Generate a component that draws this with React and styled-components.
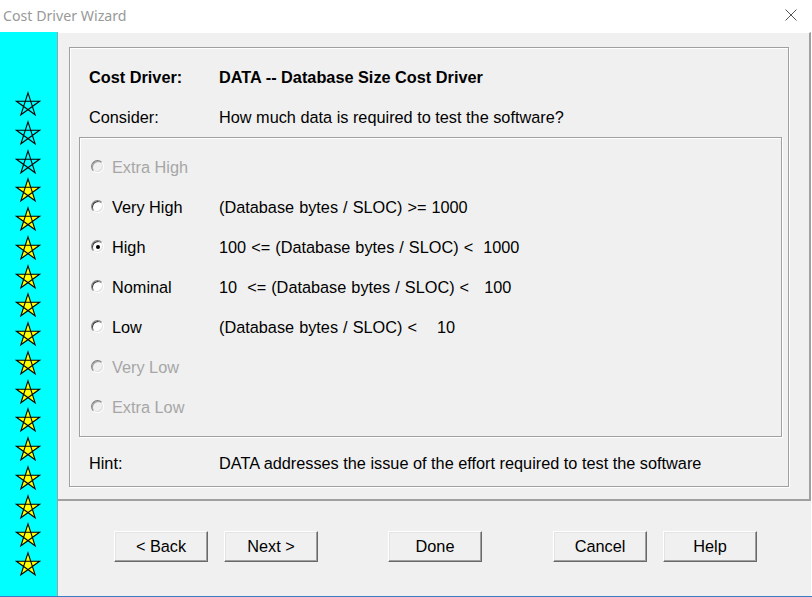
import React from 'react';
import styled, { createGlobalStyle } from 'styled-components';

const GlobalStyle = createGlobalStyle`
  html, body {
    margin: 0;
    padding: 0;
    background: #ffffff;
  }
  * {
    box-sizing: border-box;
  }
`;

// star points for the pentagram (drawn 0-2-4-1-3)
const STAR_PATH = 'M12 0.8 L19.1 22.8 L0.4 9.2 L23.6 9.2 L4.9 22.8 Z';

const ratings = [
  { level: 'Extra High', text: '', disabled: true },
  { level: 'Very High', text: '(Database bytes / SLOC) >= 1000' },
  { level: 'High', text: '100 <= (Database bytes / SLOC) <  1000', checked: true },
  { level: 'Nominal', text: '10  <= (Database bytes / SLOC) <   100' },
  { level: 'Low', text: '(Database bytes / SLOC) <    10' },
  { level: 'Very Low', text: '', disabled: true },
  { level: 'Extra Low', text: '', disabled: true },
];

const stars = Array.from({ length: 17 }, (_, i) => i >= 3);

const Star = ({ filled }) => (
  <StarIcon viewBox="0 0 24 24" width="24" height="24">
    <path
      d={STAR_PATH}
      fill={filled ? '#ffff00' : 'none'}
      stroke="#000"
      strokeWidth="1.1"
      strokeLinejoin="miter"
    />
  </StarIcon>
);

const App = () => {
  return (
    <>
      <GlobalStyle />
      <Window>
        <TitleBar>
          <Title>Cost Driver Wizard</Title>
          <CloseIcon viewBox="0 0 12 12" width="12" height="12">
            <path d="M0.5 0.5 L11.5 11.5 M11.5 0.5 L0.5 11.5" stroke="#555" strokeWidth="1" />
          </CloseIcon>
        </TitleBar>

        <Body>
          <Sidebar>
            {stars.map((filled, i) => (
              <Star key={i} filled={filled} />
            ))}
          </Sidebar>

          <Main>
            <TopSection>
              <Panel>
                <HeaderRow>
                  <Strong>Cost Driver:</Strong>
                  <Strong>DATA -- Database Size Cost Driver</Strong>
                </HeaderRow>
                <HeaderRow>
                  <span>Consider:</span>
                  <span>How much data is required to test the software?</span>
                </HeaderRow>

                <GroupBox>
                  {ratings.map((r) => (
                    <RadioRow key={r.level} $disabled={r.disabled}>
                      <Radio $checked={r.checked} $disabled={r.disabled} />
                      <span>{r.level}</span>
                      <Desc>{r.text}</Desc>
                    </RadioRow>
                  ))}
                </GroupBox>

                <HintRow>
                  <span>Hint:</span>
                  <span>DATA addresses the issue of the effort required to test the software</span>
                </HintRow>
              </Panel>
            </TopSection>

            <ButtonBar>
              <Button>&lt; Back</Button>
              <Button $space={16}>Next &gt;</Button>
              <Button $space={70}>Done</Button>
              <Button $space={71}>Cancel</Button>
              <Button $space={16}>Help</Button>
            </ButtonBar>
          </Main>
        </Body>
      </Window>
    </>
  );
};

const Window = styled.div`
  width: 812px;
  height: 597px;
  display: flex;
  flex-direction: column;
  background: #ffffff;
  font-family: 'Liberation Sans', Arial, sans-serif;
  font-size: 16.3px;
  color: #000;
  overflow: hidden;
`;

const TitleBar = styled.div`
  height: 32px;
  flex: none;
  display: flex;
  align-items: center;
  justify-content: space-between;
  padding: 0 15px 2px 3px;
  background: #ffffff;
`;

const Title = styled.span`
  font-family: 'Noto Sans', 'Open Sans', sans-serif;
  font-size: 14.2px;
  color: #999999;
`;

const CloseIcon = styled.svg`
  display: block;
`;

const Body = styled.div`
  flex: 1;
  display: flex;
  border-bottom: 1px solid #3b7cc4;
  min-height: 0;
`;

const Sidebar = styled.div`
  width: 58px;
  flex: none;
  background: #00ffff;
  border-right: 1px solid #a0a0a0;
  display: flex;
  flex-direction: column;
  align-items: flex-start;
  padding: 60px 0 0 16px;
  gap: 4.75px;
`;

const StarIcon = styled.svg`
  display: block;
  flex: none;
  overflow: visible;
`;

const Main = styled.div`
  flex: 1;
  display: flex;
  flex-direction: column;
  background: #f0f0f0;
  margin-right: 1px;
`;

const TopSection = styled.div`
  flex: none;
  border-top: 1px solid #ffffff;
  border-right: 2px solid #a0a0a0;
  border-bottom: 2px solid #a0a0a0;
  padding: 14px 20px 12px 11px;
`;

const Panel = styled.div`
  height: 440px;
  border: 1px solid #a0a0a0;
  box-shadow: inset 1px 1px 0 #ffffff, 1px 1px 0 #ffffff;
  padding: 9px 6px 3px 9px;
  display: flex;
  flex-direction: column;
`;

const HeaderRow = styled.div`
  height: 40px;
  display: grid;
  grid-template-columns: 130px 1fr;
  align-items: center;
  padding: 1px 0 0 10px;
  white-space: nowrap;
`;

const HintRow = styled(HeaderRow)`
  margin-top: 6px;
`;

const Strong = styled.span`
  font-weight: bold;
`;

const GroupBox = styled.div`
  height: 300px;
  border: 1px solid #a0a0a0;
  box-shadow: inset 1px 1px 0 #ffffff, 1px 1px 0 #ffffff;
  padding: 9px 0 9px 11px;
`;

const RadioRow = styled.div`
  height: 40px;
  display: grid;
  grid-template-columns: 13px 99px 1fr;
  column-gap: 8px;
  align-items: center;
  padding-top: 1px;
  color: ${(p) => (p.$disabled ? '#a6a6a6' : '#000')};
`;

const Desc = styled.span`
  white-space: pre;
  word-spacing: 0.5px;
`;

const Radio = styled.span`
  position: relative;
  width: 13px;
  height: 13px;
  border-radius: 50%;
  background: ${(p) => (p.$disabled ? '#f0f0f0' : '#ffffff')};
  border: 1px solid;
  border-color: #808080 #ffffff #ffffff #808080;
  box-shadow: inset 1px 1px 0 ${(p) => (p.$disabled ? '#a0a0a0' : '#404040')},
    inset -1px -1px 0 #dcdcdc;
  margin-top: -2px;

  &::after {
    content: '';
    display: ${(p) => (p.$checked ? 'block' : 'none')};
    position: absolute;
    left: 3.5px;
    top: 3.5px;
    width: 4px;
    height: 4px;
    border-radius: 50%;
    background: #000;
  }
`;

const ButtonBar = styled.div`
  flex: 1;
  display: flex;
  align-items: flex-start;
  padding: 30px 0 0 56px;
`;

const Button = styled.button`
  width: 94px;
  height: 31px;
  margin-left: ${(p) => p.$space || 0}px;
  padding: 0;
  font-family: 'Liberation Sans', Arial, sans-serif;
  font-size: 16.3px;
  color: #000;
  background: #f0f0f0;
  border: 1px solid;
  border-color: #ffffff #696969 #696969 #ffffff;
  box-shadow: inset -1px -1px 0 #a0a0a0, inset 1px 1px 0 #e3e3e3;
  cursor: default;
`;

export default App;
